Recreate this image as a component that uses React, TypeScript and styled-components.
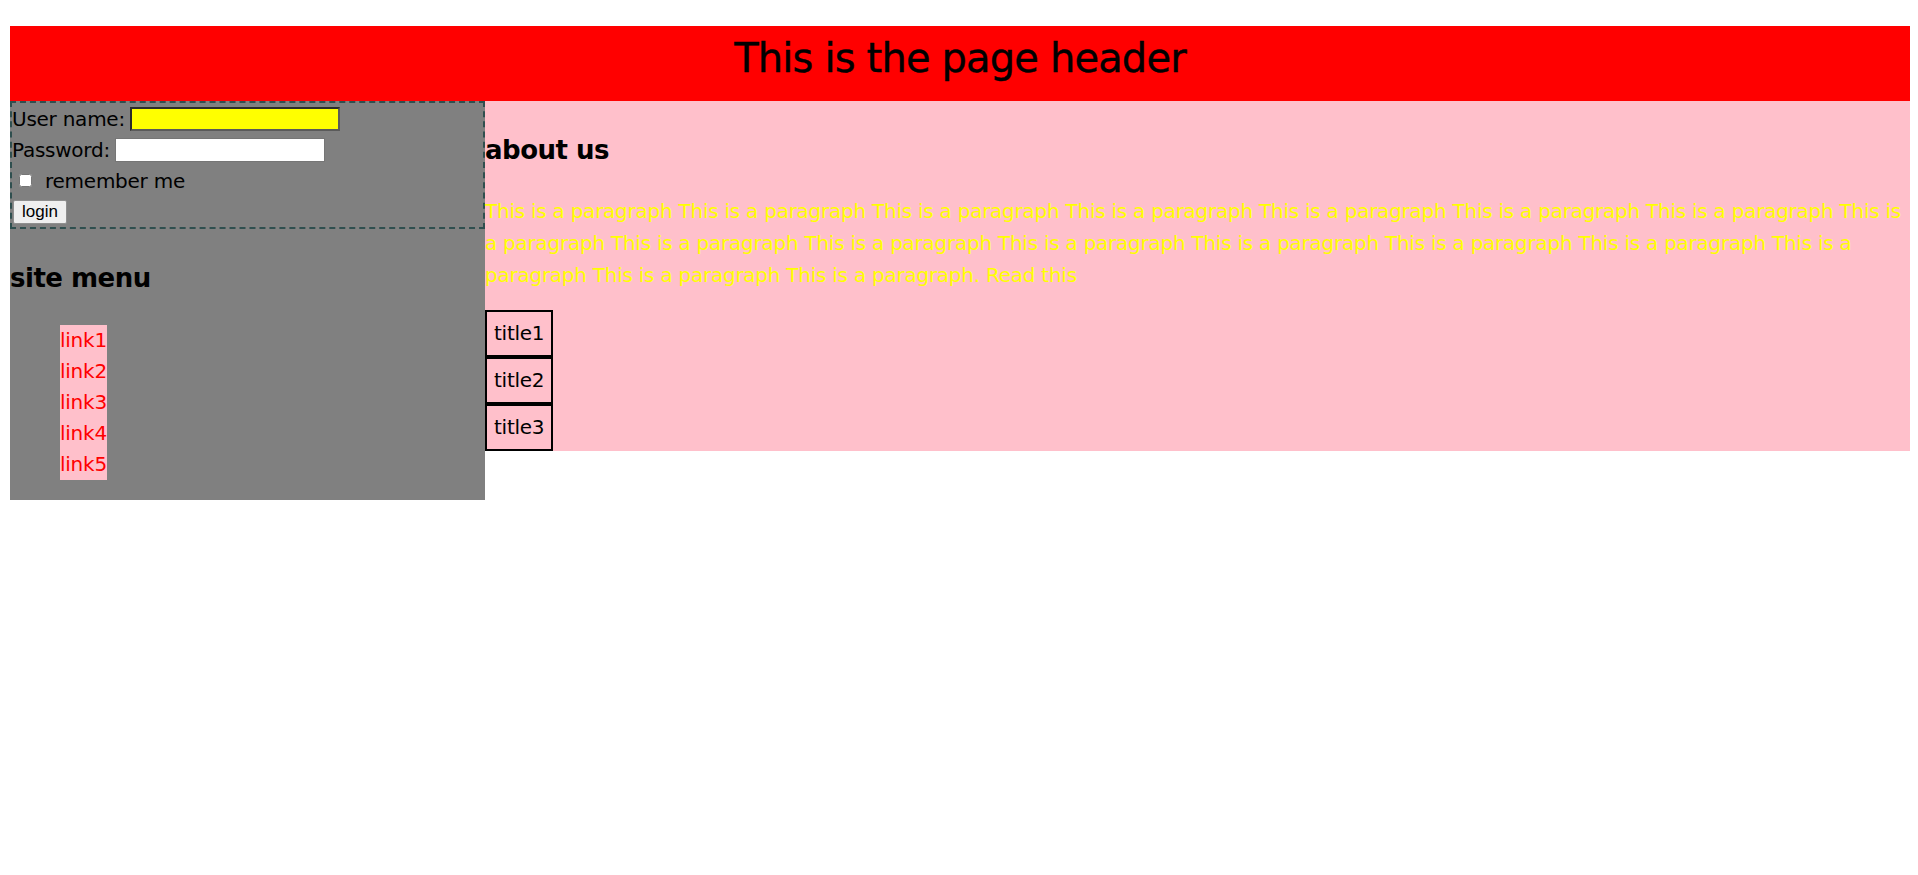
import React from "react";
import styled, { createGlobalStyle } from "styled-components";

const GlobalStyle = createGlobalStyle`
  html, body {
    margin: 0;
    padding: 0;
    background: #ffffff;
  }
  body {
    font-family: "DejaVu Sans", "Liberation Sans", sans-serif;
    font-size: 20px;
    letter-spacing: -0.25px;
    color: #000000;
  }
`;

const Page = styled.div`
  padding: 26px 8px 0 10px;
`;

const Header = styled.header`
  box-sizing: border-box;
  height: 75px;
  padding-top: 12px;
  background: #ff0000;
  text-align: center;
`;

const HeaderTitle = styled.h1`
  margin: 0;
  font-size: 40px;
  font-weight: normal;
  line-height: 40px;
  letter-spacing: -0.85px;
  color: #000000;
  -webkit-text-stroke: 0.4px #000000;
`;

const Columns = styled.div`
  display: flex;
  align-items: flex-start;
`;

const Sidebar = styled.aside`
  flex: none;
  width: 475px;
  background: #808080;
`;

const Main = styled.main`
  flex: 1;
  min-width: 0;
  background: #ffc0cb;
`;

const LoginBox = styled.form`
  display: flex;
  flex-direction: column;
  margin: 0;
  border: 2px dashed #2f4f4f;
`;

const FieldRow = styled.div<{ $gap?: number; $indent?: number }>`
  display: flex;
  align-items: center;
  height: 31px;
  gap: ${(p) => p.$gap ?? 5}px;
  padding-left: ${(p) => p.$indent ?? 0}px;
`;

const FieldLabel = styled.label`
  white-space: nowrap;
`;

const TextInput = styled.input<{ $highlight?: boolean }>`
  box-sizing: border-box;
  width: 210px;
  height: 24px;
  margin: 0;
  padding: 1px 2px;
  font-family: "Liberation Sans", Arial, sans-serif;
  font-size: 16px;
  background: ${(p) => (p.$highlight ? "#ffff00" : "#ffffff")};
  border: ${(p) => (p.$highlight ? "2px solid #2b2b2b" : "1px solid #767676")};
  border-right-color: ${(p) => (p.$highlight ? "#5a5a5a" : "#767676")};
  border-bottom-color: ${(p) => (p.$highlight ? "#5a5a5a" : "#767676")};
  outline: none;
`;

const CheckBox = styled.input`
  width: 13px;
  height: 13px;
  margin: 0 0 0 7px;
`;

const LoginButton = styled.button`
  box-sizing: border-box;
  height: 24px;
  margin: 0;
  padding: 0 8px;
  font-family: "Liberation Sans", Arial, sans-serif;
  font-size: 17px;
  letter-spacing: 0;
  color: #000000;
  background: #efefef;
  border: 1px solid #8f8f8f;
  border-radius: 2px;
`;

const SectionTitle = styled.h2`
  margin: 34px 0 0;
  font-size: 26px;
  line-height: 30px;
  font-weight: bold;
  letter-spacing: -0.5px;
`;

const LinkList = styled.ul`
  width: fit-content;
  margin: 32px 0 20px 50px;
  padding: 0;
  list-style: none;
  background: #ffc0cb;
  line-height: 31px;
`;

const MenuLink = styled.a`
  color: #ff0000;
  text-decoration: none;
`;

const Paragraph = styled.p`
  margin: 30px 0 19px;
  line-height: 32px;
  color: #ffff00;
`;

const TitleStack = styled.div`
  display: flex;
  flex-direction: column;
  align-items: flex-start;
`;

const TitleBox = styled.div`
  padding: 6px 7px;
  line-height: 31px;
  border: 2px solid #000000;
`;

const sentence = "This is a paragraph";

export default function App() {
  const text =
    Array.from({ length: 17 }, () => sentence).join(" ") + ". Read this";
  return (
    <>
      <GlobalStyle />
      <Page>
        <Header>
          <HeaderTitle>This is the page header</HeaderTitle>
        </Header>
        <Columns>
          <Sidebar>
            <LoginBox onSubmit={(e) => e.preventDefault()}>
              <FieldRow>
                <FieldLabel htmlFor="user">User name:</FieldLabel>
                <TextInput id="user" type="text" $highlight />
              </FieldRow>
              <FieldRow>
                <FieldLabel htmlFor="pass">Password:</FieldLabel>
                <TextInput id="pass" type="password" />
              </FieldRow>
              <FieldRow $gap={13}>
                <CheckBox id="remember" type="checkbox" />
                <FieldLabel htmlFor="remember">remember me</FieldLabel>
              </FieldRow>
              <FieldRow $indent={1}>
                <LoginButton type="submit">login</LoginButton>
              </FieldRow>
            </LoginBox>
            <SectionTitle>site menu</SectionTitle>
            <LinkList>
              {[1, 2, 3, 4, 5].map((n) => (
                <li key={n}>
                  <MenuLink href="#">link{n}</MenuLink>
                </li>
              ))}
            </LinkList>
          </Sidebar>
          <Main>
            <SectionTitle>about us</SectionTitle>
            <Paragraph>{text}</Paragraph>
            <TitleStack>
              <TitleBox>title1</TitleBox>
              <TitleBox>title2</TitleBox>
              <TitleBox>title3</TitleBox>
            </TitleStack>
          </Main>
        </Columns>
      </Page>
    </>
  );
}
